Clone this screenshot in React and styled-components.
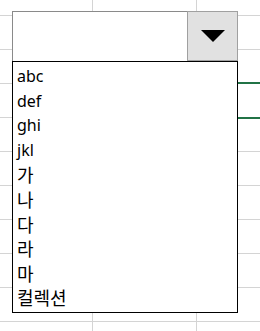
import React from "react";
import styled, { createGlobalStyle } from "styled-components";

const GlobalStyle = createGlobalStyle`
  html, body {
    margin: 0;
    padding: 0;
    background: #ffffff;
  }
  body {
    font-family: "Noto Sans", "Noto Sans CJK KR", sans-serif;
  }
`;

const Sheet = styled.div`
  position: relative;
  width: 260px;
  height: 331px;
  overflow: hidden;
  background-color: #ffffff;
  background-image:
    linear-gradient(to bottom, #d4d4d4 1px, transparent 1px),
    linear-gradient(to right, #d4d4d4 1px, transparent 1px);
  background-size: 100% 34px, 104px 100%;
  background-position: 0 15px, 92px 0;
`;

const Selection = styled.div`
  position: absolute;
  left: 195px;
  top: 82px;
  width: 100px;
  height: 33px;
  border-top: 2px solid #217346;
  border-bottom: 2px solid #217346;
  border-left: 2px solid #217346;
`;

const Dropdown = styled.div`
  position: absolute;
  left: 12px;
  top: 11px;
  width: 226px;
  display: flex;
  flex-direction: column;
`;

const Field = styled.div`
  display: flex;
  height: 50px;
`;

const Input = styled.div`
  flex: 1;
  background: #ffffff;
  border-top: 1px solid #8a8a8a;
  border-left: 1px solid #8a8a8a;
`;

const ArrowButton = styled.div`
  width: 49px;
  height: 48px;
  background: #e1e1e1;
  border: 1px solid #a0a0a0;
  display: flex;
  align-items: center;
  justify-content: center;
`;

const List = styled.ul`
  margin: 0;
  padding: 2px 0 0 4px;
  list-style: none;
  height: 248px;
  border: 1px solid #000000;
  background: #ffffff;
  box-sizing: content-box;
  width: 220px;
`;

const Item = styled.li`
  height: 24.6px;
  line-height: 24.6px;
  font-size: ${(p) => (p.$cjk ? "18px" : "16px")};
  color: #000000;
  white-space: nowrap;
  overflow: visible;
  font-family: ${(p) =>
    p.$cjk ? '"Noto Sans CJK KR", sans-serif' : '"Noto Sans", "Noto Sans CJK KR", sans-serif'};
`;

const items = ["abc", "def", "ghi", "jkl", "가", "나", "다", "라", "마", "컬렉션"];

export default function App() {
  return (
    <>
      <GlobalStyle />
      <Sheet>
        <Selection />
        <Dropdown>
          <Field>
            <Input />
            <ArrowButton>
              <svg width="24" height="12" viewBox="0 0 24 12">
                <polygon points="0,0 24,0 12,12" fill="#000" />
              </svg>
            </ArrowButton>
          </Field>
          <List>
            {items.map((t) => (
              <Item key={t} $cjk={/[\uac00-\ud7af]/.test(t)}>
                {t}
              </Item>
            ))}
          </List>
        </Dropdown>
      </Sheet>
    </>
  );
}
